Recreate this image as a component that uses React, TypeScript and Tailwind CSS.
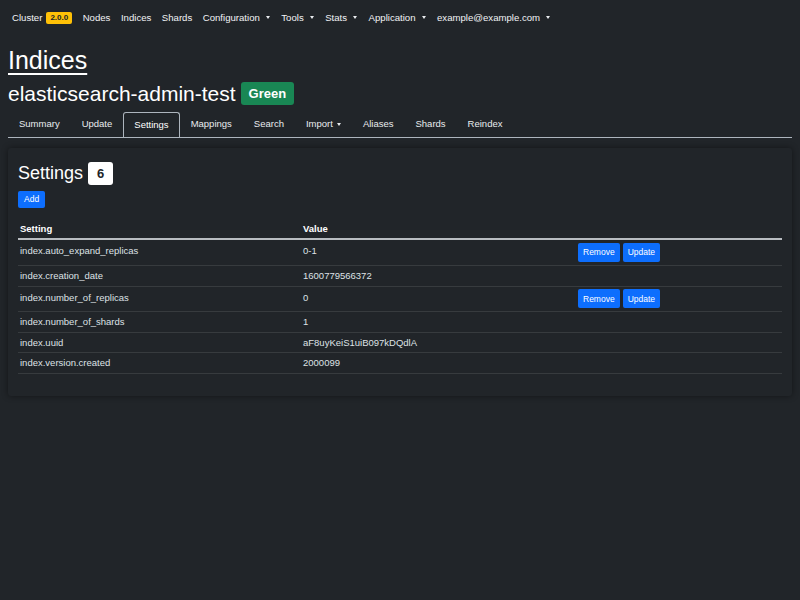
import React from 'react';

const font = { fontFamily: '"Liberation Sans", Arial, Helvetica, sans-serif' };

function Caret({ wide }: { wide?: boolean }) {
  return (
    <span
      className={
        'inline-block h-0 w-0 border-x-[2.5px] border-t-[3px] border-x-transparent border-t-[#e9ecef] align-middle ' +
        (wide ? 'ml-[6px] mr-[1px]' : 'ml-[4px]')
      }
    />
  );
}

const navItems: { label: string; caret?: boolean }[] = [
  { label: 'Nodes' },
  { label: 'Indices' },
  { label: 'Shards' },
  { label: 'Configuration', caret: true },
  { label: 'Tools', caret: true },
  { label: 'Stats', caret: true },
  { label: 'Application', caret: true },
  { label: 'example@example.com', caret: true },
];

const tabs: { label: string; caret?: boolean; active?: boolean }[] = [
  { label: 'Summary' },
  { label: 'Update' },
  { label: 'Settings', active: true },
  { label: 'Mappings' },
  { label: 'Search' },
  { label: 'Import', caret: true },
  { label: 'Aliases' },
  { label: 'Shards' },
  { label: 'Reindex' },
];

const settings: { name: string; value: string; editable?: boolean; h: string }[] = [
  { name: 'index.auto_expand_replicas', value: '0-1', editable: true, h: 'h-[26px] pt-[4px]' },
  { name: 'index.creation_date', value: '1600779566372', h: 'h-[21px] pt-[3px]' },
  { name: 'index.number_of_replicas', value: '0', editable: true, h: 'h-[25px] pt-[4px]' },
  { name: 'index.number_of_shards', value: '1', h: 'h-[21px] pt-[3px]' },
  { name: 'index.uuid', value: 'aF8uyKeiS1uiB097kDQdlA', h: 'h-[20px] pt-[3px]' },
  { name: 'index.version.created', value: '2000099', h: 'h-[21px] pt-[3px]' },
];

function SmallButton({ children }: { children: React.ReactNode }) {
  return (
    <button className="h-[19px] rounded-[2px] bg-[#0d6efd] px-[5px] text-[8.5px] leading-none text-white">
      {children}
    </button>
  );
}

export default function App() {
  return (
    <div className="min-h-[600px] w-full bg-[#212529] text-[#dee2e6]" style={font}>
      {/* Top navbar */}
      <nav className="flex h-[36px] items-center gap-[10.5px] px-[12px] text-[9.6px] text-[#f1f3f5]">
        <span className="flex items-center">
          Cluster
          <span className="ml-[4px] rounded-[2px] bg-[#ffc107] px-[4px] py-[2px] text-[8px] font-bold leading-none text-[#212529]">
            2.0.0
          </span>
        </span>
        {navItems.map((item) => (
          <span key={item.label} className="flex items-center">
            {item.label}
            {item.caret && <Caret wide />}
          </span>
        ))}
      </nav>

      <div className="px-[8px]">
        <h1 className="mt-[9px] text-[25px] font-medium leading-[30px] text-white underline decoration-[2px] underline-offset-[4px]">
          Indices
        </h1>
        <div className="mt-[6px] flex items-center gap-[5px]">
          <h2 className="text-[21px] font-medium leading-[25px] text-white">elasticsearch-admin-test</h2>
          <span className="rounded-[3px] bg-[#198754] px-[8px] py-[4px] text-[13px] font-bold leading-[15px] text-white">
            Green
          </span>
        </div>

        {/* Tabs */}
        <div className="mt-[6px] flex border-b border-[#adb5bd]">
          {tabs.map((t) => (
            <span
              key={t.label}
              className={
                'flex h-[25px] items-center px-[10px] text-[9.5px] ' +
                (t.active
                  ? '-mb-px rounded-t-[3px] border border-b-0 border-[#adb5bd] bg-[#212529] text-white'
                  : 'border border-transparent text-[#e9ecef]')
              }
            >
              {t.label}
              {t.caret && <Caret />}
            </span>
          ))}
        </div>

        {/* Card */}
        <div className="mt-[10px] rounded-[3px] bg-[#212529] px-[10px] pb-[22px] pt-[13px] shadow-[0_0_6px_rgba(0,0,0,0.45)]">
          <div className="flex items-center gap-[5px]">
            <h3 className="text-[18px] font-medium leading-[24px] text-white">Settings</h3>
            <span className="rounded-[3px] bg-white px-[9px] py-[4px] text-[13px] font-bold leading-[15px] text-[#212529]">
              6
            </span>
          </div>
          <button className="mt-[6px] h-[17px] rounded-[2px] bg-[#0d6efd] px-[6px] text-[8.5px] leading-none text-white">
            Add
          </button>

          <table className="mt-[10px] w-full border-collapse text-left text-[9.5px]">
            <thead>
              <tr className="border-b-2 border-[#b9bdc1]">
                <th className="h-[20px] w-[283px] px-[2px] py-0 align-middle font-bold text-white">Setting</th>
                <th className="h-[20px] w-[275px] px-[2px] py-0 align-middle font-bold text-white">Value</th>
                <th className="px-[2px]" />
              </tr>
            </thead>
            <tbody>
              {settings.map((s) => (
                <tr key={s.name} className="border-b border-[#373b3e]">
                  <td className={'px-[2px] py-0 align-top ' + s.h}>{s.name}</td>
                  <td className={'px-[2px] py-0 align-top ' + s.h}>{s.value}</td>
                  <td className="px-[2px] py-0 align-middle">
                    {s.editable && (
                      <div className="flex gap-[3px]">
                        <SmallButton>Remove</SmallButton>
                        <SmallButton>Update</SmallButton>
                      </div>
                    )}
                  </td>
                </tr>
              ))}
            </tbody>
          </table>
        </div>
      </div>
    </div>
  );
}
